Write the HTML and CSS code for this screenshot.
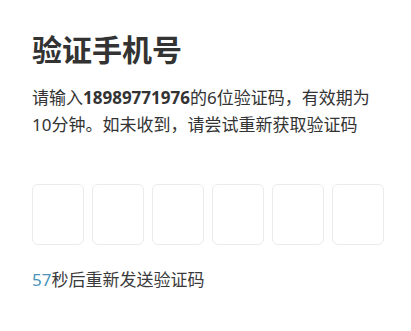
FILE: index.html
```html
<!DOCTYPE html>
<html lang="zh-CN">
<head>
    <meta charset="UTF-8">
    <meta name="viewport" content="width=device-width, initial-scale=1.0">
    <title>验证手机号</title>
    <link rel="stylesheet" href="styles.css">
</head>
<body>
    <div class="container">
        <h1>验证手机号</h1>

        <div class="description">
            请输入<b>18989771976</b>的6位验证码，有效期为10分钟。如未收到，请尝试重新获取验证码
        </div>

        <div class="code-boxes">
            <div class="code-box"></div>
            <div class="code-box"></div>
            <div class="code-box"></div>
            <div class="code-box"></div>
            <div class="code-box"></div>
            <div class="code-box"></div>
        </div>

        <div class="resend">
            <span class="countdown">57</span>秒后重新发送验证码
        </div>
    </div>
</body>
</html>
```

FILE: styles.css
```css
body {
    font-family: 'Noto Sans', 'Noto Sans CJK SC', sans-serif;
    margin: 0;
    padding: 0;
    background-color: #FFF;
}
.container {
    padding: 30px 27px 0 32px;
    color: #333;
}
h1 {
    font-size: 30px;
    font-weight: bold;
    line-height: 40px;
    margin: 0 0 14px 0;
    color: #333;
}
.description {
    font-size: 17px;
    line-height: 27px;
    color: #333;
}
.description b {
    font-weight: bold;
}
.code-boxes {
    display: flex;
    gap: 8px;
    margin-top: 46px;
}
.code-box {
    width: 50px;
    height: 59px;
    border: 1px solid #EBEBEB;
    border-radius: 6px;
}
.resend {
    margin-top: 23px;
    font-size: 17px;
    line-height: 24px;
    color: #3A3A3A;
}
.countdown {
    color: #4A94BA;
}
```
